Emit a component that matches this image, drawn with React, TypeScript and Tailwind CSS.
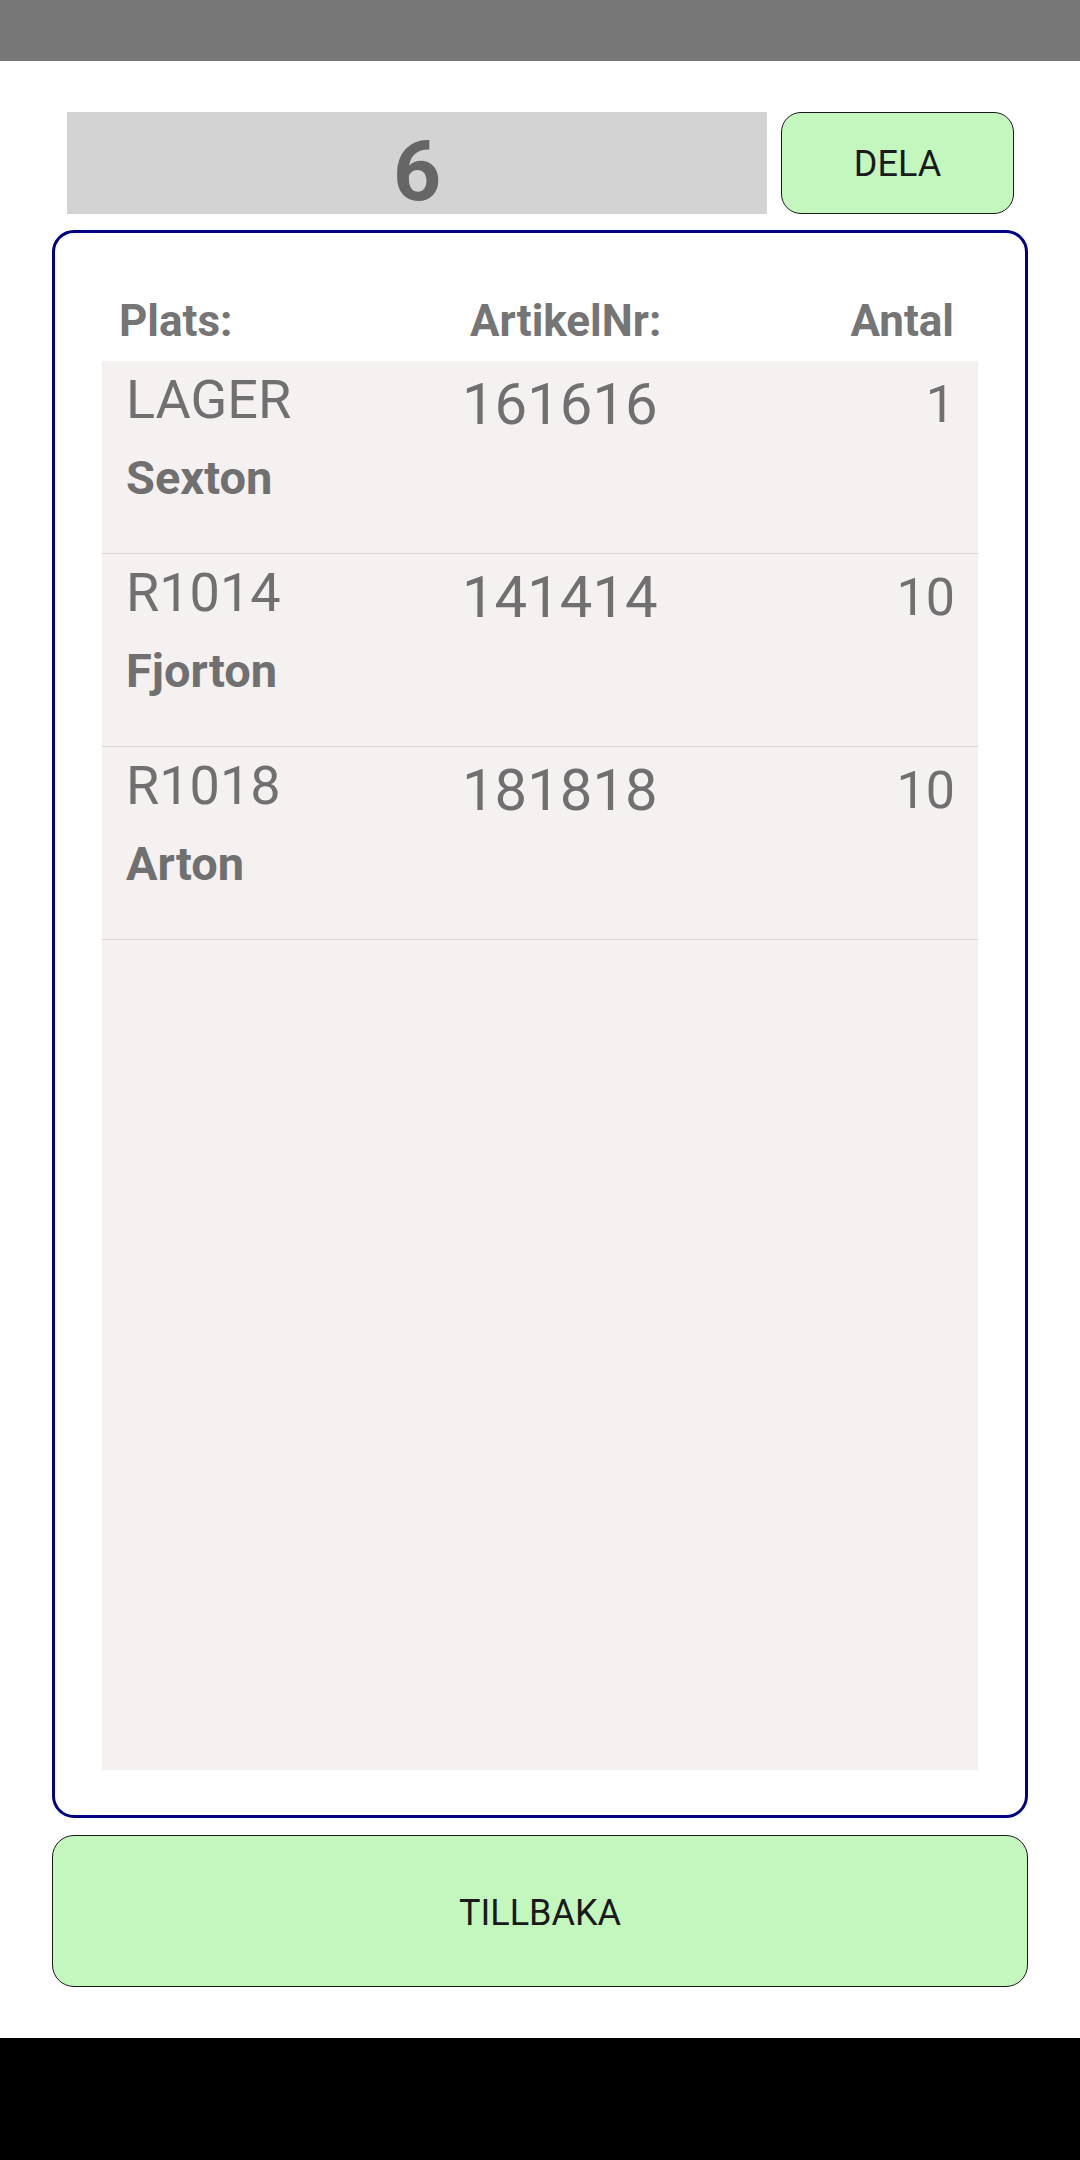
import React from 'react'

const rows = [
  { plats: 'LAGER', namn: 'Sexton', artikel: '161616', antal: '1' },
  { plats: 'R1014', namn: 'Fjorton', artikel: '141414', antal: '10' },
  { plats: 'R1018', namn: 'Arton', artikel: '181818', antal: '10' },
]

const App = () => {
  return (
    <div className="w-[1080px] h-[2160px] flex flex-col bg-white font-['Roboto',sans-serif]">
      <div className="h-[61px] bg-[#777777]" />

      <div className="flex-1 flex flex-col px-[52px]">
        <div className="flex mt-[51px] h-[102px] gap-[14px] pl-[15px] pr-[14px]">
          <div className="flex-1 bg-[#d3d3d3] flex items-center justify-center">
            <span className="text-[84px] leading-none font-bold text-[#666666] pt-[18px]">6</span>
          </div>
          <button className="w-[233px] rounded-[20px] border border-[#1a1a1a] bg-[#c4f7bd] text-[36px] text-[#1a1a1a] leading-none pt-[2px]">
            DELA
          </button>
        </div>

        <div className="mt-[16px] h-[1588px] border-[3px] border-[#000080] rounded-[22px] px-[47px] pb-[45px] flex flex-col">
          <div className="flex items-end pt-[66px] pb-[17px] text-[44px] leading-[45px] font-bold text-[#757575]">
            <span className="pl-[17px] w-[368px]">Plats:</span>
            <span className="flex-1">ArtikelNr:</span>
            <span className="pr-[24px]">Antal</span>
          </div>

          <div className="flex-1 bg-[#f4f1f0]">
            {rows.map((r) => (
              <div key={r.artikel} className="h-[193px] flex border-b border-[#d9d6d5] pt-[8px] pl-[24px] pr-[23px] text-[#707070]">
                <div className="w-[336px] flex flex-col">
                  <span className="text-[54px] leading-[62px]">{r.plats}</span>
                  <span className="text-[47px] leading-[94px] font-bold">{r.namn}</span>
                </div>
                <div className="flex-1">
                  <span className="text-[58px] leading-[70px]">{r.artikel}</span>
                </div>
                <div>
                  <span className="text-[52px] leading-[72px]">{r.antal}</span>
                </div>
              </div>
            ))}
          </div>
        </div>

        <button className="mt-[17px] h-[152px] rounded-[22px] border border-[#1a1a1a] bg-[#c4f7bd] text-[36px] text-[#1a1a1a] leading-none pt-[4px]">
          TILLBAKA
        </button>
      </div>

      <div className="h-[122px] bg-black" />
    </div>
  )
}

export default App
